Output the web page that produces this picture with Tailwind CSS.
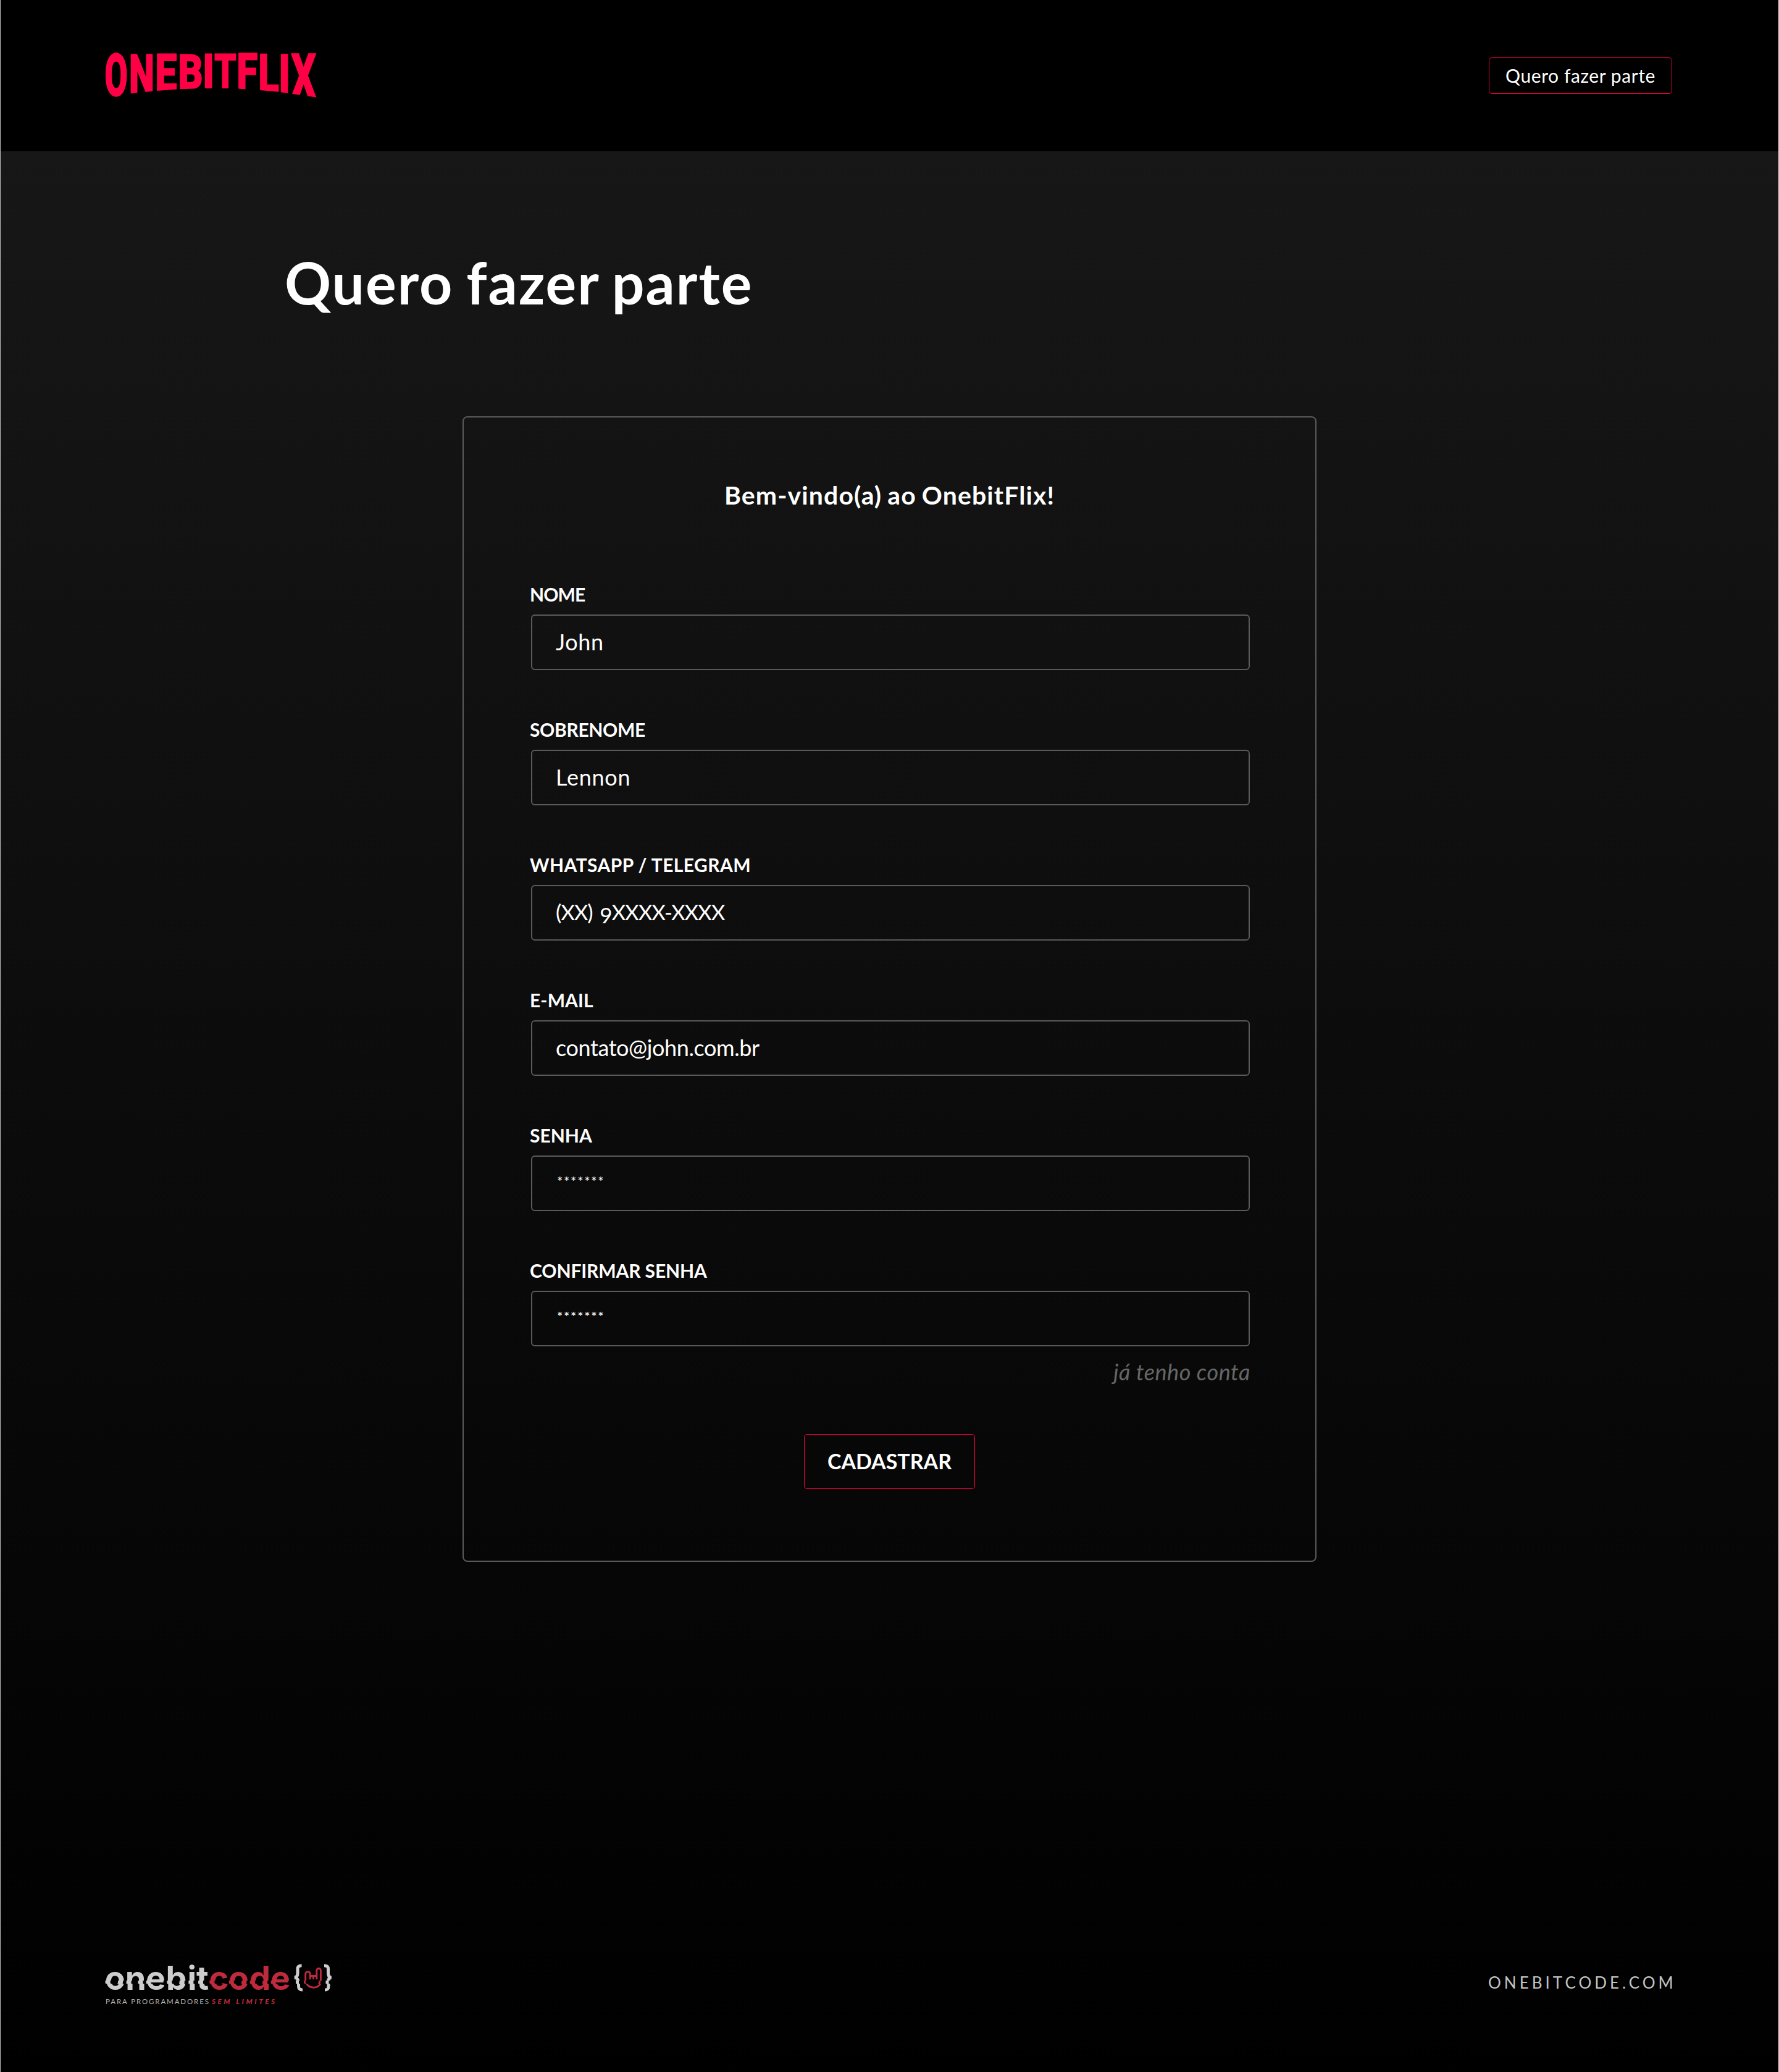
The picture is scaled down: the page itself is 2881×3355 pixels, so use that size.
<!DOCTYPE html>
<html lang="pt-BR">
<head>
<meta charset="utf-8">
<title>OnebitFlix - Quero fazer parte</title>
<script src="https://cdn.jsdelivr.net/npm/@tailwindcss/browser@4"></script>
</head>
<body class="bg-black">
<div class="flex h-[3355px] w-[2881px] flex-col overflow-hidden border-r border-l border-r-[#dddddd] border-l-[#bdbdbd] bg-black font-['Lato','Open_Sans',sans-serif] text-white">

  <header class="flex h-[245px] shrink-0 items-start justify-between bg-black pt-[86px] pr-[172px] pl-[169px]">
    <!-- OnebitFlix wordmark: letters stretched along a curved base line -->
    <svg class="h-[74px] w-[345px] overflow-visible" viewBox="170 86 345 74" role="img" aria-label="OnebitFlix">
      <g class="fill-[#ff0045] stroke-[#ff0045] font-['Roboto',sans-serif] text-[100px] font-bold" stroke-width="4">
        <text transform="translate(169.8 153.6) scale(.533 .922)">O</text>
        <text transform="translate(209.2 151) scale(.574 .880)">N</text>
        <text transform="translate(251.4 146) scale(.617 .809)">E</text>
        <text transform="translate(288.4 142.6) scale(.624 .762)">B</text>
        <text transform="translate(328.6 142) scale(.623 .753)">I</text>
        <text transform="translate(347.4 142) scale(.563 .753)">T</text>
        <text transform="translate(383.4 143.2) scale(.611 .770)">F</text>
        <text transform="translate(418.5 148) scale(.609 .837)">L</text>
        <text transform="translate(451.6 151) scale(.623 .880)">I</text>
        <text transform="translate(472 157) scale(.618 .963)">X</text>
      </g>
      <path fill="#000" d="M209 151.700L254 147L291 144.300L326 143.300H382L398 144.500L421 146L451 148.800L466 151L511 157.500L514 158V162H209Z"/>
    </svg>
    <a class="mt-[7px] flex h-[59px] w-[297px] items-center justify-center rounded-[5px] border border-[#f0003f] pb-[2px] text-[30px] leading-[30px] tracking-[0.58px]">Quero fazer parte</a>
  </header>

  <main class="flex grow flex-col bg-linear-to-b/srgb from-[#171717] to-black">
    <h1 class="mt-[167px] ml-[460px] text-[93px] leading-[90px] font-bold tracking-[2.03px] [word-spacing:-4px]">Quero fazer parte</h1>

    <form class="mx-auto mt-[172px] flex h-[1855px] w-[1383px] flex-col rounded-[8px] border-2 border-[#5a5a5a] px-[107px] pt-[106px]">
      <h2 class="text-center text-[41px] leading-[40px] font-bold tracking-[1.1px] [word-spacing:-2px]">Bem-vindo(a) ao OnebitFlix!</h2>

      <div class="mt-[125px] flex flex-col gap-[81px]">
        <div class="flex flex-col gap-[18px]">
          <label class="text-[30px] leading-[30px] font-bold tracking-[-0.9px]">NOME</label>
          <div class="ml-[2px] flex h-[90px] w-[1164px] items-center rounded-[6px] border-2 border-[#5a5a5a] pb-[3px] pl-[38px] text-[36px] tracking-[0.65px]">John</div>
        </div>
        <div class="flex flex-col gap-[18px]">
          <label class="text-[30px] leading-[30px] font-bold tracking-[-0.34px]">SOBRENOME</label>
          <div class="ml-[2px] flex h-[90px] w-[1164px] items-center rounded-[6px] border-2 border-[#5a5a5a] pb-[3px] pl-[38px] text-[36px] tracking-[0.75px]">Lennon</div>
        </div>
        <div class="flex flex-col gap-[18px]">
          <label class="text-[30px] leading-[30px] font-bold tracking-[0.42px]">WHATSAPP / TELEGRAM</label>
          <div class="ml-[2px] flex h-[90px] w-[1164px] items-center rounded-[6px] border-2 border-[#5a5a5a] pb-[3px] pl-[38px] text-[35px] tracking-[-1.15px] [word-spacing:4px]"><p>(XX) <span class="inline-block translate-y-[5px]">9</span>XXXX-XXXX</p></div>
        </div>
        <div class="flex flex-col gap-[18px]">
          <label class="text-[30px] leading-[30px] font-bold tracking-[0.1px]">E-MAIL</label>
          <div class="ml-[2px] flex h-[90px] w-[1164px] items-center rounded-[6px] border-2 border-[#5a5a5a] pb-[3px] pl-[38px] text-[36px] tracking-[-0.4px]">contato@john.com.br</div>
        </div>
        <div class="flex flex-col gap-[18px]">
          <label class="text-[30px] leading-[30px] font-bold">SENHA</label>
          <div class="ml-[2px] flex h-[90px] w-[1164px] items-center rounded-[6px] border-2 border-[#5a5a5a] pb-[7px] pl-[40px] text-[22px] tracking-[1.7px]">*******</div>
        </div>
        <div class="flex flex-col gap-[18px]">
          <label class="text-[30px] leading-[30px] font-bold tracking-[-0.11px]">CONFIRMAR SENHA</label>
          <div class="ml-[2px] flex h-[90px] w-[1164px] items-center rounded-[6px] border-2 border-[#5a5a5a] pb-[7px] pl-[40px] text-[22px] tracking-[1.7px]">*******</div>
        </div>
      </div>

      <a class="mt-[23px] -mr-[2px] self-end text-[36px] leading-[36px] tracking-[0.55px] text-[#666666] italic">já tenho conta</a>
      <button type="button" class="mt-[83px] flex h-[89px] w-[277px] items-center justify-center self-center rounded-[5px] border border-[#ff0045] pb-[2px] text-[34px] leading-[34px] font-bold">CADASTRAR</button>
    </form>

    <footer class="mt-auto flex items-start justify-between pr-[165px] pb-[103px] pl-[169px]">
      <!-- onebitcode wordmark with a horizontal glitch slice -->
      <svg class="h-[76px] w-[375px] overflow-visible" viewBox="170 3176 375 76" role="img" aria-label="onebitcode">
        <defs>
          <clipPath id="upper"><rect x="160" y="3170" width="400" height="37"/></clipPath>
          <clipPath id="slice"><rect x="160" y="3207" width="400" height="5"/></clipPath>
          <clipPath id="lower"><rect x="160" y="3212" width="400" height="16"/></clipPath>
          <g id="mark">
            <text y="3222" class="font-['Inter',sans-serif] text-[54px] font-bold"><tspan fill="#cdcdcd" x="169.7 202.7 236 268.5 303.5 318">onebit</tspan><tspan fill="#bf2b3c" x="338.500 370 404 438">code</tspan></text>
            <g fill="none" stroke="#cdcdcd" stroke-width="5">
              <path d="M488.5 3182.7C483.500 3182.700 482 3184.500 482 3188V3195C482 3199 480.500 3201.500 477 3202C480.500 3202.500 483 3205 483 3209V3216C483 3220.500 485 3222 489.500 3222"/>
              <path d="M525 3182.700C530 3182.700 531.500 3184.500 531.500 3188V3195C531.500 3199 533 3201.500 536.500 3202C533 3202.500 531.500 3205 531.500 3209V3216C531.500 3220.500 530 3222 525.500 3222"/>
            </g>
            <path fill="none" stroke="#bf2b3c" stroke-width="2.9" d="M502.300 3205V3196.300a3.800 3.800 0 0 0-7.600 0V3207C495 3214 500.500 3218.200 507.300 3218.200S519.200 3214 519.400 3207V3190.500a3.300 3.300 0 0 0-6.600 0V3205M502.300 3199.500H512.800M507.500 3199.500V3205"/>
          </g>
        </defs>
        <use href="#mark" clip-path="url(#upper)"/>
        <g transform="translate(-1.500 0)"><use href="#mark" clip-path="url(#slice)"/></g>
        <g transform="translate(.5 0)"><use href="#mark" clip-path="url(#lower)"/></g>
        <text x="171" y="3245" fill="#b4b4b4" class="text-[11.5px]" textLength="167">PARA PROGRAMADORES</text>
        <text x="343" y="3245" fill="#bf2b3c" class="text-[11.5px] font-black italic" textLength="102">SEM LIMITES</text>
      </svg>
      <a class="mt-[21px] w-[305px] text-[26px] leading-[26px] tracking-[5.02px] whitespace-nowrap text-[#c4c4c4]">ONEBITCODE.COM</a>
    </footer>
  </main>
</div>
</body>
</html>
